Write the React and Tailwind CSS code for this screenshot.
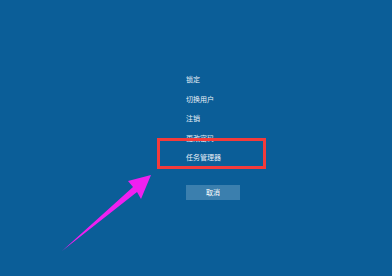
export default function App() {
  const items = ["锁定", "切换用户", "注销", "更改密码", "任务管理器"];

  return (
    <div className="relative w-[392px] h-[276px] overflow-hidden bg-[#0b5e98] font-['Noto_Sans_CJK_SC',sans-serif] text-[#e8f0f7]">
      <div className="pl-[186px] pt-[70px] flex flex-col">
        {items.map((t) => (
          <div key={t} className="text-[7px] leading-[19.5px] h-[19.5px]">
            {t}
          </div>
        ))}
        <div className="mt-[17px] w-[54px] h-[15px] bg-[#3b7fae] flex items-center justify-center text-[7px] text-white">
          取消
        </div>
      </div>

      {/* highlight box */}
      <div className="absolute left-[157px] top-[138px] w-[109px] h-[31px] border-[3px] border-[#f43b3b]" />

      {/* arrow */}
      <svg className="absolute left-0 top-0" width="392" height="276" viewBox="0 0 392 276">
        <polygon
          points="62,251 133,187 128,181 151,175 141,199 137,192"
          fill="#f020f0"
        />
      </svg>
    </div>
  );
}
